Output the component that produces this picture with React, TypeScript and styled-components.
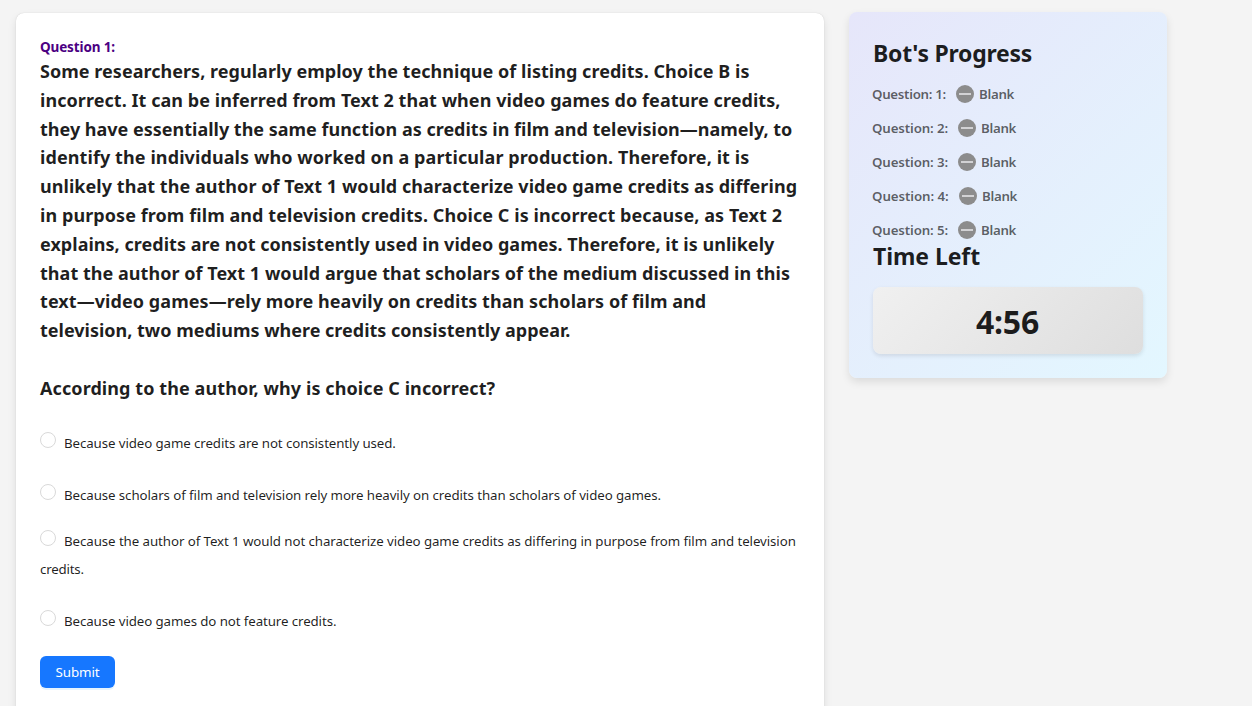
import React from "react";
import styled, { createGlobalStyle } from "styled-components";

const GlobalStyle = createGlobalStyle`
  * { box-sizing: border-box; }
  body {
    margin: 0;
    background: #f4f4f4;
    color: rgba(0, 0, 0, 0.88);
    font-family: "Noto Sans", "Open Sans", sans-serif;
    overflow: hidden;
  }
`;

const Page = styled.div`
  display: flex;
  align-items: flex-start;
  gap: 25px;
  height: 706px;
  padding: 12px 0 0 16px;
  overflow: hidden;
`;

const QuestionCard = styled.main`
  width: 808px;
  height: 760px;
  margin-top: 1px;
  padding: 23px 24px;
  background: #fff;
  border-radius: 8px;
  box-shadow: 0 4px 8px rgba(0, 0, 0, 0.1), 0 0 1px rgba(0, 0, 0, 0.2);
`;

const QuestionLabel = styled.div`
  height: 21px;
  font-size: 13.5px;
  font-weight: 700;
  line-height: 22px;
  letter-spacing: -0.13px;
  color: #4b0082;
`;

const Line = styled.span<{ $track: number }>`
  display: block;
  width: max-content;
  white-space: pre;
  letter-spacing: ${(p) => p.$track}px;
`;

const Passage = styled.div`
  font-size: 18px;
  font-weight: 700;
  line-height: 28.8px;
`;

const Prompt = styled(Passage)`
  margin-top: 28.8px;
`;

const Options = styled.div`
  display: flex;
  flex-direction: column;
  padding-top: 26.4px;
  font-size: 13.3px;
  line-height: 28px;
`;

const Option = styled.label<{ $after: number }>`
  display: block;
  margin-bottom: ${(p) => p.$after}px;
`;

const OptionHead = styled.span`
  display: flex;
  align-items: center;
  gap: 8px;
  height: 28px;
`;

const Radio = styled.span`
  width: 16px;
  height: 16px;
  margin-bottom: 6px;
  border: 1px solid #d9d9d9;
  border-radius: 50%;
  background: #fff;
`;

const SubmitButton = styled.button`
  display: block;
  width: 75px;
  height: 32px;
  padding: 0;
  border: 0;
  border-radius: 6px;
  background: #1677ff;
  box-shadow: 0 2px 0 rgba(5, 145, 255, 0.1);
  color: #fff;
  font: 400 13.4px/32px "Noto Sans", sans-serif;
  letter-spacing: -0.1px;
`;

const ProgressCard = styled.aside`
  width: 318px;
  height: 366px;
  padding: 26px 24px 24px;
  border-radius: 8px;
  background: linear-gradient(135deg, #e6e6fa, #e3f7ff);
  box-shadow: 0 4px 8px rgba(0, 0, 0, 0.1);
`;

const Title = styled.h2<{ $track: number }>`
  margin: 0;
  height: 30px;
  font-size: 23px;
  font-weight: 700;
  line-height: 30px;
  letter-spacing: ${(p) => p.$track}px;
`;

const Rows = styled.div`
  display: flex;
  flex-direction: column;
  gap: 10px;
  padding: 14px 0 0;
  margin-bottom: -1px;
`;

const Row = styled.div`
  display: flex;
  align-items: center;
  height: 24px;
  font-size: 13.3px;
  font-weight: 600;
  letter-spacing: -0.3px;
  color: rgba(0, 0, 0, 0.62);
`;

const RowLabel = styled.span<{ $width: number; $track: number }>`
  flex: none;
  width: ${(p) => p.$width}px;
  margin-left: -1px;
  letter-spacing: ${(p) => p.$track}px;
`;

const BlankIcon = styled.svg`
  width: 18px;
  height: 18px;
  margin-right: 5px;
`;

const Timer = styled.div`
  height: 67px;
  margin-top: 16px;
  padding-right: 1px;
  border-radius: 8px;
  background: linear-gradient(135deg, #f0f0f0, #dedede);
  box-shadow: 0 2px 4px rgba(0, 0, 0, 0.1);
  text-align: center;
  font-size: 32px;
  font-weight: 700;
  line-height: 69px;
  letter-spacing: -0.2px;
`;

const passage: [string, number][] = [
  ["Some researchers, regularly employ the technique of listing credits. Choice B is", 0.034],
  ["incorrect. It can be inferred from Text 2 that when video games do feature credits,", 0.05],
  ["they have essentially the same function as credits in film and television—namely, to", -0.006],
  ["identify the individuals who worked on a particular production. Therefore, it is", 0.088],
  ["unlikely that the author of Text 1 would characterize video game credits as differing", 0.045],
  ["in purpose from film and television credits. Choice C is incorrect because, as Text 2", 0.069],
  ["explains, credits are not consistently used in video games. Therefore, it is unlikely", 0.024],
  ["that the author of Text 1 would argue that scholars of the medium discussed in this", 0.036],
  ["text—video games—rely more heavily on credits than scholars of film and", 0.065],
  ["television, two mediums where credits consistently appear.", -0.007],
];

const options: { head: string; track: number; rest?: string; after: number }[] = [
  { head: "Because video game credits are not consistently used.", track: -0.1, after: 24 },
  {
    head: "Because scholars of film and television rely more heavily on credits than scholars of video games.",
    track: -0.088,
    after: 18,
  },
  {
    head: "Because the author of Text 1 would not characterize video game credits as differing in purpose from film and television",
    track: -0.08,
    rest: "credits.",
    after: 24,
  },
  { head: "Because video games do not feature credits.", track: -0.1, after: 21 },
];

const progress = [
  { width: 84, track: -0.3 },
  { width: 86, track: -0.13 },
  { width: 86, track: -0.13 },
  { width: 87, track: -0.08 },
  { width: 86, track: -0.13 },
];

export default function App() {
  return (
    <>
      <GlobalStyle />
      <Page>
        <QuestionCard>
          <QuestionLabel>Question 1:</QuestionLabel>
          <Passage>
            {passage.map(([text, track]) => (
              <Line key={text} $track={track}>{text}</Line>
            ))}
          </Passage>
          <Prompt>
            <Line $track={0.086}>According to the author, why is choice C incorrect?</Line>
          </Prompt>
          <Options>
            {options.map((o) => (
              <Option key={o.head} $after={o.after}>
                <OptionHead>
                  <Radio />
                  <Line $track={o.track}>{o.head}</Line>
                </OptionHead>
                {o.rest && <Line $track={-0.2}>{o.rest}</Line>}
              </Option>
            ))}
          </Options>
          <SubmitButton>Submit</SubmitButton>
        </QuestionCard>
        <ProgressCard>
          <Title $track={-0.26}>Bot's Progress</Title>
          <Rows>
            {progress.map((row, i) => (
              <Row key={i}>
                <RowLabel $width={row.width} $track={row.track}>{`Question: ${i + 1}:`}</RowLabel>
                <BlankIcon viewBox="0 0 18 18">
                  <circle cx="9" cy="9" r="9" fill="#8c8c8c" />
                  <rect x="3" y="8" width="12" height="2" fill="#d2d2d4" />
                </BlankIcon>
                <span>Blank</span>
              </Row>
            ))}
          </Rows>
          <Title $track={-0.08}>Time Left</Title>
          <Timer>4:56</Timer>
        </ProgressCard>
      </Page>
    </>
  );
}
